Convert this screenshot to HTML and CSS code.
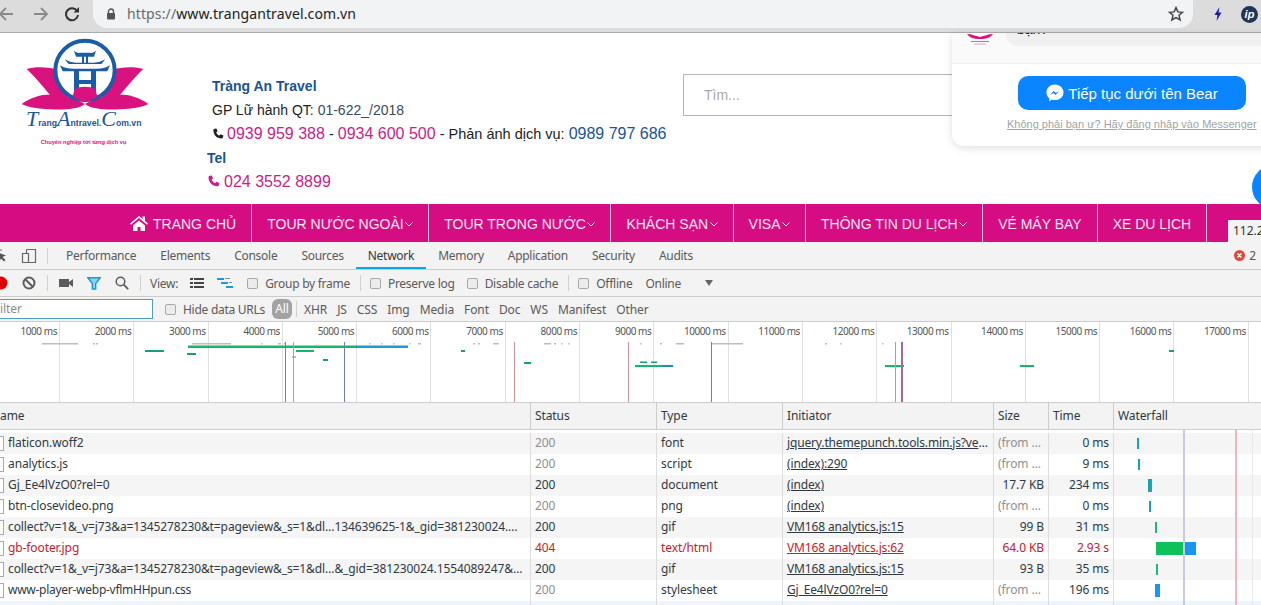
FILE: index.html
```html
<!DOCTYPE html>
<html lang="vi">
<head>
<meta charset="utf-8">
<title>Tràng An Travel</title>
<link rel="stylesheet" href="styles.css">
</head>
<body>
<header class="chrome">
  <svg class="cb cb-back" width="16" height="16" viewBox="0 0 16 16"><path d="M15 8H2M8 2 2 8l6 6" fill="none" stroke="#8a8a8a" stroke-width="1.8"/></svg>
  <svg class="cb cb-fwd" width="16" height="16" viewBox="0 0 16 16"><path d="M1 8h13M8 2l6 6-6 6" fill="none" stroke="#8a8a8a" stroke-width="1.8"/></svg>
  <svg class="cb cb-reload" width="16" height="16" viewBox="0 0 16 16"><path d="M13.2 5.2A6 6 0 1 0 14 9" fill="none" stroke="#333" stroke-width="2"/><path d="M9.5 6.5H15V1z" fill="#333"/></svg>
  <div class="omni">
    <svg class="lock" width="10" height="12" viewBox="0 0 10 12"><path d="M2.5 5V3.5a2.5 2.5 0 0 1 5 0V5" fill="none" stroke="#555" stroke-width="1.4"/><rect x="1" y="5" width="8" height="6.5" rx="1" fill="#555"/></svg>
    <span class="url"><span class="url-scheme">https://</span>www.trangantravel.com.vn</span>
    <svg class="star" width="16" height="16" viewBox="0 0 16 16"><path d="m8 1.6 1.9 4.3 4.6.4-3.5 3 1.1 4.6L8 11.5l-4.1 2.4L5 9.3l-3.5-3 4.6-.4z" fill="none" stroke="#444" stroke-width="1.5"/></svg>
  </div>
  <svg class="ext-bolt" width="10" height="16" viewBox="0 0 10 16"><path d="M6.5 1 1.5 9h3l-1 6 5-8.5h-3z" fill="#1a1aa8"/></svg>
  <div class="ext-ip">ip</div>
</header>

<section class="page">
  <div class="site-head">
    <svg class="logo" width="170" height="125" viewBox="0 0 510 375">
      <path d="M80 117C110 108 150 112 175 120L205 205L150 195C125 165 100 135 80 117zM430 117C400 108 360 112 335 120L305 205L360 195C385 165 410 135 430 117z" fill="#d9127f"/>
      <path d="M65 222C95 200 135 190 170 195 205 200 235 210 255 222 235 238 190 240 150 238 115 236 85 232 65 222zM445 222C415 200 375 190 340 195 305 200 275 210 255 222 275 238 320 240 360 238 395 236 425 232 445 222z" fill="#d9127f"/>
      <circle cx="255" cy="121" r="89" fill="#fff" stroke="#1a5ca5" stroke-width="12"/>
      <path d="M222 62c8 6 14 8 20 6h26c6 2 12 0 20-6l-6 18h-54zM246 80h6v20h-6zM258 80h6v20h-6zM194 88c12 6 20 10 34 10h54c14 0 22-4 34-10l-12 14h-98zM180 106c14 8 24 10 40 10h70c16 0 26-2 40-10l-8 18H188zM222 124h15v76h-15zM273 124h15v76h-15zM237 150h36v12h-36z" fill="#1a5ca5"/>
      <path d="M226 176c12-8 46-8 58 0 4 8 6 16 8 22-10 10-26 18-37 18s-27-8-37-18c2-6 4-14 8-22z" fill="#d9127f"/>
      <text class="logo-text" x="78" y="288"><tspan class="logo-cap">T</tspan><tspan>rang</tspan><tspan class="logo-cap">A</tspan><tspan>ntravel.</tspan><tspan class="logo-cap">C</tspan><tspan>om.vn</tspan></text>
      <text class="logo-sub" x="122" y="343">Chuyên nghiệp tới từng dịch vụ</text>
    </svg>
    <div class="contact">
      <p class="c-title">Tràng An Travel</p>
      <p class="c-line">GP Lữ hành QT: <span class="c-soft">01-622_/2018</span></p>
      <p class="c-phone"><svg class="ph" width="12" height="12" viewBox="0 0 12 12"><path d="M2.6.8 4.4.4l1.2 2.8-1.4 1.2c.6 1.4 1.8 2.6 3.2 3.2l1.200-1.400 2.800 1.200-.4 1.800c-.2.8-.8 1.200-1.600 1.200C5 10.400 1.400 6.800 1.400 2.400c0-.8.4-1.400 1.200-1.600z" fill="#222"/></svg><span class="pink">0939 959 388</span> - <span class="pink">0934 600 500</span> - Phản ánh dịch vụ: <span class="blue">0989 797 686</span></p>
      <p class="c-tel">Tel</p>
      <p class="c-phone2"><svg class="ph ph-pink" width="13" height="13" viewBox="0 0 12 12"><path d="M2.600.8 4.400.4l1.200 2.800-1.400 1.200c.6 1.400 1.800 2.600 3.200 3.200l1.200-1.400 2.800 1.200-.4 1.800c-.2.8-.8 1.200-1.600 1.200C5 10.400 1.400 6.800 1.400 2.400c0-.8.4-1.400 1.200-1.600z" fill="#c71f87"/></svg><span class="pink">024 3552 8899</span></p>
    </div>
    <div class="search">Tìm...</div>
  </div>
  <nav class="nav">
    <a class="nav-item"><svg class="home" width="20" height="17" viewBox="0 0 20 17"><path d="M10 2 1 9.500l1 1.200L10 4l8 6.700 1-1.200-3-2.500V2.500h-2.500v2.400zM4 11.500 10 6.400l6 5.100V17h-4.500v-4h-3v4H4z" fill="#fff"/></svg>TRANG CHỦ</a>
    <a class="nav-item">TOUR NƯỚC NGOÀI<svg class="chev" width="8" height="5" viewBox="0 0 8 5"><path d="m.5.500 3.500 3.500 3.500-3.500" fill="none" stroke="#fff"/></svg></a>
    <a class="nav-item">TOUR TRONG NƯỚC<svg class="chev" width="8" height="5" viewBox="0 0 8 5"><path d="m.5.500 3.500 3.500 3.500-3.500" fill="none" stroke="#fff"/></svg></a>
    <a class="nav-item">KHÁCH SẠN<svg class="chev" width="8" height="5" viewBox="0 0 8 5"><path d="m.5.500 3.500 3.500 3.500-3.500" fill="none" stroke="#fff"/></svg></a>
    <a class="nav-item">VISA<svg class="chev" width="8" height="5" viewBox="0 0 8 5"><path d="m.5.500 3.500 3.500 3.500-3.500" fill="none" stroke="#fff"/></svg></a>
    <a class="nav-item">THÔNG TIN DU LỊCH<svg class="chev" width="8" height="5" viewBox="0 0 8 5"><path d="m.5.500 3.500 3.500 3.500-3.500" fill="none" stroke="#fff"/></svg></a>
    <a class="nav-item">VÉ MÁY BAY</a>
    <a class="nav-item">XE DU LỊCH</a>
  </nav>
  <div class="size-tip">112.2</div>
  <div class="fb-circle"></div>
  <aside class="fb-widget">
    <div class="fb-top">
      <svg class="fb-avatar" width="28" height="12" viewBox="0 0 28 12"><path d="M1 1c5 0 8 2 13 3 5-1 8-3 13-3-2 3-6 5-13 5S3 4 1 1z" fill="#d9127f"/><rect x="5" y="8" width="18" height="1" fill="#7a8fb8"/><rect x="8" y="10.500" width="12" height="1" fill="#e59ac6"/></svg>
      <div class="fb-bubble"><span class="fb-text">bạn?</span></div>
    </div>
    <div class="fb-bottom">
      <a class="fb-btn"><svg width="18" height="18" viewBox="0 0 18 18"><path d="M9 .5C4.200.5.500 4 .500 8.400c0 2.400 1.100 4.400 2.800 5.800v3l2.700-1.500c.9.300 2 .4 3 .4 4.800 0 8.500-3.500 8.500-7.700S13.800.5 9 .5z" fill="#fff"/><path d="m3.900 11 3.700-4 2.300 2 3.300-2-3.600 4-2.300-2z" fill="#0a84ff"/></svg>Tiếp tục dưới tên Bear</a>
      <a class="fb-link">Không phải bạn ư? Hãy đăng nhập vào Messenger</a>
    </div>
  </aside>
</section>

<section class="devtools">
  <div class="dt-tabs">
    <svg class="ic-inspect" width="14" height="14" viewBox="0 0 14 14"><path d="M1 1h7M1 1v7" fill="none" stroke="#666"/><path d="M3 3l9 3.500-3.500 1.500 3 3-1.500 1.500-3-3L5.500 12z" fill="#555"/></svg>
    <svg class="ic-device" width="16" height="16" viewBox="0 0 16 16"><path d="M5.500 1.500h9v13h-9M1.500 5.500h6v9h-6zM5.500 1.500v4" fill="none" stroke="#666" stroke-width="1.200"/></svg>
    <span class="sep tabs-sep"></span>
    <a class="tab">Performance</a>
    <a class="tab">Elements</a>
    <a class="tab">Console</a>
    <a class="tab">Sources</a>
    <a class="tab tab-on">Network</a>
    <a class="tab">Memory</a>
    <a class="tab">Application</a>
    <a class="tab">Security</a>
    <a class="tab">Audits</a>
    <span class="err"><svg width="11" height="11" viewBox="0 0 11 11"><circle cx="5.500" cy="5.500" r="5.500" fill="#e0483e"/><path d="m3.500 3.500 4 4m0-4-4 4" stroke="#fff" stroke-width="1.300"/></svg>2</span>
  </div>

  <div class="dt-bar">
    <span class="ibtn"><svg width="14" height="14" viewBox="0 0 14 14"><circle cx="7" cy="7" r="6.500" fill="#e00000"/></svg></span>
    <span class="ibtn"><svg width="14" height="14" viewBox="0 0 14 14"><circle cx="7" cy="7" r="5.500" fill="none" stroke="#5c5c5c" stroke-width="2"/><path d="m3 3 8 8" stroke="#5c5c5c" stroke-width="2"/></svg></span>
    <span class="sep"></span>
    <span class="ibtn"><svg width="14" height="10" viewBox="0 0 14 10"><path d="M0 1h10v8H0zM10 4l4-3v8l-4-3z" fill="#5c5c5c"/></svg></span>
    <span class="ibtn"><svg width="14" height="13" viewBox="0 0 14 13"><path d="M.8.800h12.400L8.700 6.500V12H5.300V6.500z" fill="#8fcff0" stroke="#1a9bd7" stroke-width="1.400"/></svg></span>
    <span class="ibtn"><svg width="14" height="14" viewBox="0 0 14 14"><circle cx="5.500" cy="5.500" r="4.300" fill="none" stroke="#5c5c5c" stroke-width="1.500"/><path d="m8.700 8.700 4.500 4.500" stroke="#5c5c5c" stroke-width="1.800"/></svg></span>
    <span class="sep"></span>
    <span class="lbl lbl-view">View:</span>
    <span class="ibtn"><svg width="14" height="10" viewBox="0 0 14 10"><path d="M0 0h3v2H0zM4 0h10v2H4zM0 4h3v2H0zM4 4h10v2H4zM0 8h3v2H0zM4 8h10v2H4z" fill="#444"/></svg></span>
    <span class="ibtn"><svg width="16" height="10" viewBox="0 0 16 10"><path d="M0 0h7v2H0zM4 4h7v2H4zM9 8h7V10H9z" fill="#1a9bd7"/><path d="M8 0h5v1H8zM12 4h3v1h-3z" fill="#8a8a8a"/></svg></span>
    <label class="chk chk-group"><span class="box"></span>Group by frame</label>
    <span class="sep sep-wide"></span>
    <label class="chk"><span class="box"></span>Preserve log</label>
    <label class="chk chk-next"><span class="box"></span>Disable cache</label>
    <span class="sep sep-wide"></span>
    <label class="chk"><span class="box"></span>Offline</label>
    <span class="lbl lbl-online">Online</span>
    <span class="tri"></span>
  </div>

  <div class="dt-filter">
    <div class="filter-input">ilter</div>
    <label class="chk chk-hide"><span class="box"></span>Hide data URLs</label>
    <span class="pill">All</span>
    <span class="sep sep-filter"></span>
    <a class="ft">XHR</a><a class="ft">JS</a><a class="ft">CSS</a><a class="ft">Img</a><a class="ft">Media</a><a class="ft">Font</a><a class="ft">Doc</a><a class="ft">WS</a><a class="ft">Manifest</a><a class="ft">Other</a>
  </div>

  <div class="overview">
    <div class="ticks">
      <span class="tick">1000 ms</span><span class="tick">2000 ms</span><span class="tick">3000 ms</span><span class="tick">4000 ms</span><span class="tick">5000 ms</span><span class="tick">6000 ms</span><span class="tick">7000 ms</span><span class="tick">8000 ms</span><span class="tick">9000 ms</span><span class="tick">10000 ms</span><span class="tick">11000 ms</span><span class="tick">12000 ms</span><span class="tick">13000 ms</span><span class="tick">14000 ms</span><span class="tick">15000 ms</span><span class="tick">16000 ms</span><span class="tick">17000 ms</span>
    </div>
    <svg class="ov-marks" width="1261" height="81" viewBox="0 0 1261 81">
      <g fill="#bdbdbd">
        <rect x="42" y="21" width="36" height="1.500"/><rect x="93" y="21" width="2" height="1.500"/><rect x="96" y="21" width="2" height="1.500"/>
        <rect x="192" y="21" width="39" height="1.500"/><rect x="261" y="21" width="1.500" height="1.500"/><rect x="278" y="21" width="3" height="1.500"/><rect x="284" y="21" width="2" height="1.500"/>
        <rect x="292" y="34" width="4" height="2"/><rect x="369" y="21" width="1.500" height="1.500"/><rect x="381" y="21" width="1.500" height="1.500"/><rect x="393" y="21" width="1.500" height="1.500"/><rect x="409" y="21" width="1.500" height="1.500"/><rect x="418" y="21" width="3" height="1.500"/>
        <rect x="473" y="21" width="2" height="1.500"/><rect x="478" y="21" width="2" height="1.500"/><rect x="493" y="21" width="6" height="1.500"/>
        <rect x="544" y="21" width="7" height="1.500"/><rect x="554" y="21" width="2" height="1.500"/><rect x="561" y="21" width="1.500" height="1.500"/><rect x="568" y="21" width="1.500" height="1.500"/>
        <rect x="640" y="21" width="1.500" height="1.500"/><rect x="660" y="21" width="2" height="1.500"/><rect x="676" y="21" width="8" height="1.500"/><rect x="711" y="21" width="32" height="1.500"/>
        <rect x="825" y="21" width="2" height="1.500"/><rect x="840" y="21" width="1.500" height="1.500"/><rect x="882" y="21" width="1.500" height="1.500"/>
      </g>
      <g fill="#12b76a">
        <rect x="188" y="23.500" width="170" height="2.500"/><rect x="145" y="28" width="19" height="2" fill="#159e86"/><rect x="187" y="31" width="9" height="2" fill="#159e86"/><rect x="296" y="28" width="18" height="2"/><rect x="323" y="37" width="5" height="2" fill="#159e86"/><rect x="461" y="28" width="4" height="2" fill="#159e86"/><rect x="524" y="40" width="7" height="2" fill="#159e86"/>
        <rect x="635" y="43" width="27" height="2"/><rect x="640" y="39.500" width="7" height="1.500" fill="#159e86"/><rect x="651" y="39.500" width="6" height="1.500" fill="#159e86"/><rect x="885" y="43" width="19" height="2"/><rect x="1020" y="43" width="14" height="2"/><rect x="1169" y="28" width="5" height="2" fill="#159e86"/>
      </g>
      <rect x="358" y="23.500" width="50" height="2.500" fill="#1a9be0"/><rect x="662" y="43" width="11" height="2" fill="#1a8fb0"/>
      <g fill="#6f7fae"><rect x="285" y="20" width="1" height="61"/><rect x="344" y="20" width="1" height="61"/><rect x="711" y="20" width="1" height="61"/></g>
      <g fill="#cf8f96"><rect x="293" y="20" width="1" height="61"/><rect x="514" y="20" width="1" height="61"/><rect x="628" y="20" width="1" height="61"/><rect x="895" y="20" width="1" height="61"/></g>
      <rect x="901" y="20" width="2" height="61" fill="#a56a8e"/>
    </svg>
  </div>

  <div class="row head">
    <div class="c c-name"><span class="head-name">Name</span></div>
    <div class="c">Status</div>
    <div class="c">Type</div>
    <div class="c">Initiator</div>
    <div class="c">Size</div>
    <div class="c">Time</div>
    <div class="c">Waterfall</div>
  </div>

  <div class="rows">
    <span class="wf-line wf-blue"></span><span class="wf-line wf-red"></span><span class="wf-line wf-grid"></span>
    <div class="row alt cached">
      <div class="c c-name"><span class="doc"></span>flaticon.woff2</div><div class="c st">200</div><div class="c">font</div><div class="c c-in"><u>jquery.themepunch.tools.min.js?ve</u>…</div><div class="c sz">(from …</div><div class="c r">0 ms</div><div class="c wf"><span class="bar thin" style="margin-left:23px;width:2px"></span></div>
    </div>
    <div class="row cached">
      <div class="c c-name"><span class="doc"></span>analytics.js</div><div class="c st">200</div><div class="c">script</div><div class="c c-in"><u>(index):290</u></div><div class="c sz">(from …</div><div class="c r">9 ms</div><div class="c wf"><span class="bar thin" style="margin-left:24px;width:2px"></span></div>
    </div>
    <div class="row alt">
      <div class="c c-name"><span class="doc"></span>Gj_Ee4lVzO0?rel=0</div><div class="c st">200</div><div class="c">document</div><div class="c c-in"><u>(index)</u></div><div class="c r">17.7 KB</div><div class="c r">234 ms</div><div class="c wf"><span class="bar bar-doc" style="margin-left:34px;width:4px"></span></div>
    </div>
    <div class="row cached">
      <div class="c c-name"><span class="doc"></span>btn-closevideo.png</div><div class="c st">200</div><div class="c">png</div><div class="c c-in"><u>(index)</u></div><div class="c sz">(from …</div><div class="c r">0 ms</div><div class="c wf"><span class="bar thin" style="margin-left:35px;width:2px"></span></div>
    </div>
    <div class="row alt">
      <div class="c c-name"><span class="doc"></span>collect?v=1&amp;_v=j73&amp;a=1345278230&amp;t=pageview&amp;_s=1&amp;dl…134639625-1&amp;_gid=381230024.…</div><div class="c st">200</div><div class="c">gif</div><div class="c c-in"><u>VM168 analytics.js:15</u></div><div class="c r">99 B</div><div class="c r">31 ms</div><div class="c wf"><span class="bar thin bar-green" style="margin-left:41px;width:2px"></span></div>
    </div>
    <div class="row err-row">
      <div class="c c-name"><span class="doc"></span>gb-footer.jpg</div><div class="c st">404</div><div class="c">text/html</div><div class="c c-in"><u>VM168 analytics.js:62</u></div><div class="c r">64.0 KB</div><div class="c r">2.93 s</div><div class="c wf"><span class="bar bar-green-solid" style="margin-left:42px;width:29px"></span><span class="bar bar-blue" style="width:11px"></span></div>
    </div>
    <div class="row alt">
      <div class="c c-name"><span class="doc"></span>collect?v=1&amp;_v=j73&amp;a=1345278230&amp;t=pageview&amp;_s=1&amp;dl…&amp;_gid=381230024.1554089247&amp;…</div><div class="c st">200</div><div class="c">gif</div><div class="c c-in"><u>VM168 analytics.js:15</u></div><div class="c r">93 B</div><div class="c r">35 ms</div><div class="c wf"><span class="bar thin bar-green" style="margin-left:42px;width:2px"></span></div>
    </div>
    <div class="row cached">
      <div class="c c-name c-tight"><span class="doc"></span>www-player-webp-vflmHHpun.css</div><div class="c st">200</div><div class="c">stylesheet</div><div class="c c-in"><u>Gj_Ee4lVzO0?rel=0</u></div><div class="c sz">(from …</div><div class="c r">196 ms</div><div class="c wf"><span class="bar bar-blue" style="margin-left:41px;width:5px"></span></div>
    </div>
    <div class="row sel"><div class="c c-name"></div><div class="c"></div><div class="c"></div><div class="c"></div><div class="c"></div><div class="c"></div><div class="c"></div></div>
  </div>
</section>
</body>
</html>
```

FILE: styles.css
```css
* { box-sizing: border-box; }
html, body { margin: 0; padding: 0; }
body {
  width: 1261px;
  height: 605px;
  overflow: hidden;
  background: #fff;
  font-family: "Liberation Sans", Arial, sans-serif;
}
p { margin: 0; }

/* browser chrome */
.chrome {
  height: 33px;
  display: flex;
  align-items: center;
  background: #dcdcdc;
  border-bottom: 1px solid #ababab;
  padding-bottom: 4px;
}
.cb { flex: none; }
.cb-back { margin-left: -2px; }
.cb-fwd { margin-left: 19px; }
.cb-reload { margin-left: 15px; }
.omni {
  width: 1100px;
  height: 28px;
  margin-left: 13px;
  margin-top: -1px;
  background: #f1f3f4;
  border-radius: 0 0 14px 14px;
  display: flex;
  align-items: center;
  padding: 0 9px 0 13px;
  flex: none;
}
.lock { flex: none; margin-right: 11px; }
.url {
  flex: 1;
  font-family: "Noto Sans", sans-serif;
  font-size: 14px;
  letter-spacing: 0.12px;
  color: #222;
  white-space: nowrap;
}
.url-scheme { color: #6a6a6a; }
.star { flex: none; }
.ext-bolt { margin-left: 20px; flex: none; }
.ext-ip {
  flex: none;
  width: 17px;
  height: 17px;
  margin-left: 18px;
  border-radius: 50%;
  background: #1d3557;
  color: #fff;
  font-size: 11px;
  font-style: italic;
  font-weight: bold;
  text-align: center;
  line-height: 16px;
}

/* website */
.page { position: relative; }
.site-head {
  height: 171px;
  display: flex;
  position: relative;
}
.logo { flex: none; margin-top: -3px; }
.logo-text {
  font-family: "Liberation Sans", sans-serif;
  font-size: 26px;
  font-weight: bold;
  fill: #1d5597;
}
.logo-cap {
  font-family: "Liberation Serif", serif;
  font-size: 66px;
  font-style: italic;
  font-weight: normal;
}
.logo-sub {
  font-family: "Liberation Sans", sans-serif;
  font-size: 17px;
  font-weight: bold;
  fill: #d9127f;
}
.contact {
  margin-left: 42px;
  padding-top: 44px;
  font-size: 14px;
  color: #222;
  white-space: nowrap;
}
.c-title { font-weight: bold; color: #1b5490; line-height: 18px; }
.c-line { line-height: 18px; margin-top: 6px; }
.c-soft { color: #3a4a5a; }
.c-phone { font-size: 14.5px; line-height: 20px; margin-top: 5px; }
.ph { margin-right: 3px; vertical-align: -1px; }
.ph-pink { margin-right: 4px; }
.pink { color: #c71f87; font-size: 16px; }
.blue { color: #1b5490; font-size: 16px; }
.c-tel { font-weight: bold; color: #1b5490; margin-left: -5px; line-height: 18px; margin-top: 5px; }
.c-phone2 { margin-left: -5px; line-height: 20px; margin-top: 5px; }
.search {
  position: absolute;
  left: 683px;
  top: 41px;
  width: 400px;
  height: 42px;
  border: 1px solid #b5b5b5;
  padding-left: 20px;
  line-height: 40px;
  font-size: 14px;
  color: #aaa;
}
.nav {
  height: 38px;
  background: #d60d82;
  display: flex;
  padding-left: 114px;
}
.nav-item {
  display: flex;
  align-items: center;
  padding: 1px 15px 0;
  border-right: 1px solid #f3c4de;
  color: #fbe6f2;
  font-size: 14px;
  white-space: nowrap;
}
.home { margin-right: 4px; margin-top: -3px; }
.chev { margin-left: 1.5px; margin-top: 2px; }
.size-tip {
  position: absolute;
  left: 1228px;
  top: 187px;
  width: 33px;
  height: 22px;
  background: #f3f3f3;
  padding-left: 5px;
  font-family: "Noto Sans", sans-serif;
  font-size: 12px;
  line-height: 22px;
  color: #333;
  white-space: nowrap;
  overflow: hidden;
}
.fb-circle {
  position: absolute;
  left: 1252px;
  top: 132px;
  width: 44px;
  height: 44px;
  border-radius: 50%;
  background: #0a84ff;
}
.fb-widget {
  position: absolute;
  left: 952px;
  top: 0;
  width: 330px;
  height: 113px;
  background: #fff;
  border-radius: 0 0 12px 12px;
  box-shadow: 0 2px 8px rgba(0, 0, 0, 0.13);
  overflow: hidden;
}
.fb-top {
  height: 31px;
  background: #fafafa;
  display: flex;
  align-items: flex-start;
  border-bottom: 1px solid #f1f1f1;
}
.fb-avatar { flex: none; margin-left: 14px; }
.fb-bubble {
  flex: none;
  width: 300px;
  height: 13px;
  margin-left: 12px;
  background: #f0f0f0;
  border-radius: 0 0 0 12px;
  overflow: hidden;
}
.fb-text { display: block; margin: -12px 0 0 11px; font-size: 14px; line-height: 16px; color: #111; }
.fb-bottom { padding: 12px 0 0 55px; display: flex; flex-direction: column; }
.fb-btn {
  width: 228px;
  height: 34px;
  margin-left: 11px;
  border-radius: 10px;
  background: #0a84ff;
  color: #fff;
  font-size: 15px;
  display: flex;
  align-items: center;
  justify-content: center;
  gap: 4px;
}
.fb-link {
  margin-top: 8px;
  font-size: 11px;
  color: #a3a3a3;
  text-decoration: underline;
  white-space: nowrap;
}

/* devtools */
.devtools {
  font-family: "Noto Sans", sans-serif;
  font-size: 12px;
  color: #303942;
  background: #fff;
}
.sep { flex: none; width: 1px; height: 16px; background: #d0d0d0; margin: 0 4px; }
.dt-tabs {
  height: 28px;
  display: flex;
  align-items: center;
  background: #f3f3f3;
  border-bottom: 1px solid #ccc;
  position: relative;
}
.ic-inspect { flex: none; margin-left: -6px; }
.ic-device { flex: none; margin-left: 13px; }
.tabs-sep { margin: 0 6px 0 10px; }
.tab {
  height: 27px;
  padding: 1px 12px 0;
  line-height: 26px;
  letter-spacing: -0.27px;
  color: #5a5a5a;
  white-space: nowrap;
}
.tab-on { color: #303942; border-bottom: 2px solid #03a9f4; }
.err {
  margin-left: auto;
  display: flex;
  align-items: center;
  gap: 4px;
  padding-right: 5px;
  color: #555;
}
.dt-bar {
  height: 27px;
  display: flex;
  align-items: center;
  background: #f3f3f3;
  border-bottom: 1px solid #ccc;
  margin-left: -13px;
  white-space: nowrap;
  letter-spacing: -0.27px;
  color: #5a5a5a;
}
.ibtn { flex: none; width: 28px; height: 26px; display: flex; align-items: center; justify-content: center; }
.lbl-view { padding-left: 5px; margin-right: 5px; }
.chk { display: flex; align-items: center; gap: 7px; flex: none; color: #5a5a5a; }
.box {
  flex: none;
  width: 11px;
  height: 11px;
  border: 1px solid #a8a8a8;
  border-radius: 2px;
  background: #ececec;
}
.chk-group { margin-left: 8px; }
.sep-wide { margin: 0 9px 0 10px; }
.chk-next { margin-left: 12px; }
.lbl-online { margin-left: 13px; }
.tri {
  margin-left: 24px;
  width: 0;
  height: 0;
  border-left: 4px solid transparent;
  border-right: 4px solid transparent;
  border-top: 6px solid #666;
}
.dt-filter {
  height: 25px;
  display: flex;
  align-items: center;
  background: #f3f3f3;
  border-bottom: 1px solid #ccc;
  white-space: nowrap;
  letter-spacing: -0.1px;
  color: #5a5a5a;
}
.filter-input {
  flex: none;
  width: 153px;
  height: 20px;
  margin-top: -1px;
  background: #fff;
  border: 1px solid #4d9dbb;
  border-left: 0;
  line-height: 18px;
  color: #8a8a8a;
}
.chk-hide { margin-left: 12px; letter-spacing: -0.27px; }
.pill {
  flex: none;
  margin-left: 7px;
  width: 20px;
  height: 20px;
  border-radius: 6px;
  background: #a3a3a3;
  color: #fff;
  text-align: center;
  line-height: 20px;
}
.sep-filter { margin: 0 2px 0 4px; }
.ft { padding: 0 5px; }
.overview {
  height: 81px;
  position: relative;
  background: #fff;
  border-bottom: 1px solid #ccc;
  overflow: hidden;
}
.ticks { display: flex; height: 100%; margin-left: -14.3px; }
.tick {
  flex: none;
  width: 74.3px;
  border-right: 1px solid #e0e0e0;
  text-align: right;
  padding: 3px 2px 0 0;
  font-size: 10px;
  letter-spacing: -0.45px;
  line-height: 13px;
  color: #555;
  white-space: nowrap;
}
.ov-marks { position: absolute; left: 0; top: 0; }
.row {
  display: grid;
  grid-template-columns: 530px 126px 126px 211px 55px 65px 148px;
  height: 21px;
  line-height: 19px;
  letter-spacing: -0.1px;
}
.head {
  height: 27px;
  line-height: 26px;
  background: #f3f3f3;
  border-bottom: 1px solid #ccc;
}
.c {
  border-left: 1px solid #ddd;
  padding: 0 4px;
  white-space: nowrap;
  overflow: hidden;
  color: inherit;
}
.head .c { border-left-color: #ccc; }
.c-name { border-left: 0; padding: 0; display: flex; align-items: flex-start; }
.c-tight { letter-spacing: -0.27px; }
.head-name { margin-left: -9px; }
.doc {
  flex: none;
  width: 4px;
  height: 15px;
  margin: 3px 4px 0 0;
  background: #fff;
  border: 1px solid #aaa;
  border-left: 0;
}
.rows { position: relative; padding-top: 3px; }
.alt { background: #f5f5f5; }
.cached .st, .sz { color: #8f8f8f; }
.err-row, .err-row .c { color: #c5202a; }
.r { text-align: right; }
.c-in { letter-spacing: -0.15px; }
.sel { background: #eef4fb; }
.wf { padding: 0; display: flex; align-items: center; }
.bar { flex: none; display: block; height: 13px; background: #1d97e6; }
.thin { height: 11px; background: #1a9bc9; }
.bar-green { background: #1fb583; }
.bar-doc { background: linear-gradient(90deg, #13a88f 0 25%, #1aa3c0 25%); }
.bar-green-solid { background: #0fc15a; }
.bar-blue { background: #1a96f0; }
.wf-line { position: absolute; top: 0; bottom: 0; z-index: 1; }
.wf-blue { left: 1183px; width: 2px; background: #c9c9e4; }
.wf-red { left: 1235px; width: 2px; background: #f0b4c0; }
.wf-grid { left: 1252px; width: 1px; background: #e8e8e8; }
```
